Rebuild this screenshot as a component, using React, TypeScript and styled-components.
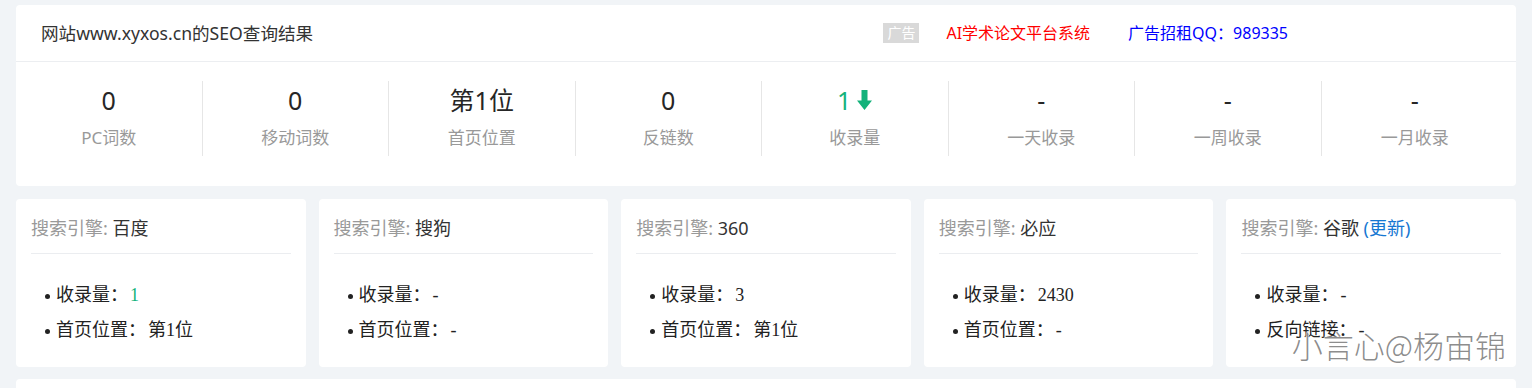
import React from "react";
import styled, { createGlobalStyle } from "styled-components";

const Global = createGlobalStyle`
  html, body { margin: 0; padding: 0; }
  body {
    background: #f1f4f7;
    font-family: "Noto Sans", "Noto Sans CJK SC", sans-serif;
    color: #333;
  }
`;

const Page = styled.div`
  position: relative;
  padding: 5px 16px 0;
  height: 388px;
  box-sizing: border-box;
  overflow: hidden;
`;

const TopCard = styled.section`
  background: #fff;
  border-radius: 4px;
`;

const HeaderBar = styled.div`
  height: 57px;
  box-sizing: border-box;
  border-bottom: 1px solid #eceef1;
  display: flex;
  align-items: center;
  padding: 0 25px;
`;

const Title = styled.h1`
  margin: 0;
  font-size: 17.6px;
  font-weight: 400;
  color: #333;
  line-height: 24px;
`;

const AdGroup = styled.div`
  margin-left: auto;
  margin-right: 203px;
  display: flex;
  align-items: center;
  font-size: 16px;
  line-height: 20px;
`;

const AdTag = styled.span`
  background: #d9d9d9;
  color: #fff;
  font-size: 14px;
  line-height: 20px;
  padding: 0 4px;
  margin-left: 1px;
`;

const AdLink = styled.a<{ $color: string; $gap: number }>`
  color: ${(p) => p.$color};
  margin-left: ${(p) => p.$gap}px;
  text-decoration: none;
`;

const Stats = styled.div`
  display: grid;
  grid-template-columns: repeat(8, 1fr);
  padding: 19px 8px 30px 0;
`;

const Stat = styled.div<{ $last?: boolean }>`
  height: 75px;
  box-sizing: border-box;
  border-right: ${(p) => (p.$last ? "none" : "1px solid #e6e6e6")};
  display: flex;
  flex-direction: column;
  align-items: center;
  padding-top: 4px;
`;

const StatValue = styled.div<{ $green?: boolean }>`
  font-size: 25px;
  line-height: 30px;
  color: ${(p) => (p.$green ? "#14b27b" : "#262626")};
  display: flex;
  align-items: center;
  gap: 6px;
`;

const StatLabel = styled.div`
  margin-top: 10px;
  font-size: 17px;
  line-height: 26px;
  color: #999;
`;

const Cards = styled.div`
  display: grid;
  grid-template-columns: repeat(5, 1fr);
  gap: 13px;
  margin-top: 13px;
`;

const EngineCard = styled.div`
  background: #fff;
  border-radius: 4px;
  padding: 0 15px;
`;

const EngineHeader = styled.div`
  padding: 17px 0 13px;
  border-bottom: 1px solid #ebedf0;
  font-size: 18px;
  line-height: 24px;
  color: #333;
`;

const Muted = styled.span`
  color: #999;
`;

const Update = styled.a`
  color: #1677d2;
  text-decoration: none;
`;

const List = styled.ul`
  margin: 0;
  padding: 22px 0 21px 14px;
  list-style: none;
  font-family: "Liberation Serif", "Noto Sans CJK SC", serif;
  font-size: 18px;
  color: #222;
`;

const Item = styled.li`
  line-height: 35px;
  height: 35px;
  white-space: nowrap;
  &::before {
    content: "";
    display: inline-block;
    vertical-align: middle;
    width: 5px;
    height: 5px;
    border-radius: 50%;
    background: #222;
    margin-right: 6px;
  }
`;

const ItemLabel = styled.span`
  font-family: "Noto Sans CJK SC", sans-serif;
`;

const ItemValue = styled.span<{ $green?: boolean }>`
  margin-left: 2px;
  color: ${(p) => (p.$green ? "#14b27b" : "#222")};
`;

const NextStrip = styled.div`
  margin-top: 12px;
  height: 20px;
  background: #fff;
  border-radius: 4px 4px 0 0;
`;

const Watermark = styled.div`
  position: absolute;
  right: 26px;
  top: 325px;
  font-family: "Noto Sans CJK SC", sans-serif;
  font-weight: 300;
  font-size: 31px;
  line-height: 40px;
  color: rgba(120, 120, 120, 0.85);
  text-shadow: 0 0 2px #fff, 0 0 2px #fff;
  pointer-events: none;
`;

const DownArrow = () => (
  <svg width="15" height="20" viewBox="0 0 15 20" aria-hidden="true">
    <path d="M4.5 0 H10.5 V10.5 H15 L7.5 20 L0 10.5 H4.5 Z" fill="#14b27b" />
  </svg>
);

const stats: { value: string; label: string; green?: boolean }[] = [
  { value: "0", label: "PC词数" },
  { value: "0", label: "移动词数" },
  { value: "第1位", label: "首页位置" },
  { value: "0", label: "反链数" },
  { value: "1", label: "收录量", green: true },
  { value: "-", label: "一天收录" },
  { value: "-", label: "一周收录" },
  { value: "-", label: "一月收录" },
];

type Row = { label: string; value: string; green?: boolean };
const engines: { name: string; update?: boolean; rows: Row[] }[] = [
  { name: "百度", rows: [{ label: "收录量：", value: "1", green: true }, { label: "首页位置：", value: "第1位" }] },
  { name: "搜狗", rows: [{ label: "收录量：", value: "-" }, { label: "首页位置：", value: "-" }] },
  { name: "360", rows: [{ label: "收录量：", value: "3" }, { label: "首页位置：", value: "第1位" }] },
  { name: "必应", rows: [{ label: "收录量：", value: "2430" }, { label: "首页位置：", value: "-" }] },
  { name: "谷歌", update: true, rows: [{ label: "收录量：", value: "-" }, { label: "反向链接：", value: "-" }] },
];

export default function App() {
  return (
    <Page>
      <Global />
      <TopCard>
        <HeaderBar>
          <Title>网站www.xyxos.cn的SEO查询结果</Title>
          <AdGroup>
            <AdTag>广告</AdTag>
            <AdLink $color="#ff0000" $gap={27}>AI学术论文平台系统</AdLink>
            <AdLink $color="#0000ff" $gap={38}>广告招租QQ：989335</AdLink>
          </AdGroup>
        </HeaderBar>
        <Stats>
          {stats.map((s, i) => (
            <Stat key={s.label} $last={i === stats.length - 1}>
              <StatValue $green={s.green}>
                {s.value}
                {s.green && <DownArrow />}
              </StatValue>
              <StatLabel>{s.label}</StatLabel>
            </Stat>
          ))}
        </Stats>
      </TopCard>
      <Cards>
        {engines.map((e) => (
          <EngineCard key={e.name}>
            <EngineHeader>
              <Muted>搜索引擎:</Muted> {e.name}
              {e.update && <> <Update>(更新)</Update></>}
            </EngineHeader>
            <List>
              {e.rows.map((r) => (
                <Item key={r.label}>
                  <ItemLabel>{r.label}</ItemLabel>
                  <ItemValue $green={r.green}>{r.value}</ItemValue>
                </Item>
              ))}
            </List>
          </EngineCard>
        ))}
      </Cards>
      <NextStrip />
      <Watermark>小言心@杨宙锦</Watermark>
    </Page>
  );
}
